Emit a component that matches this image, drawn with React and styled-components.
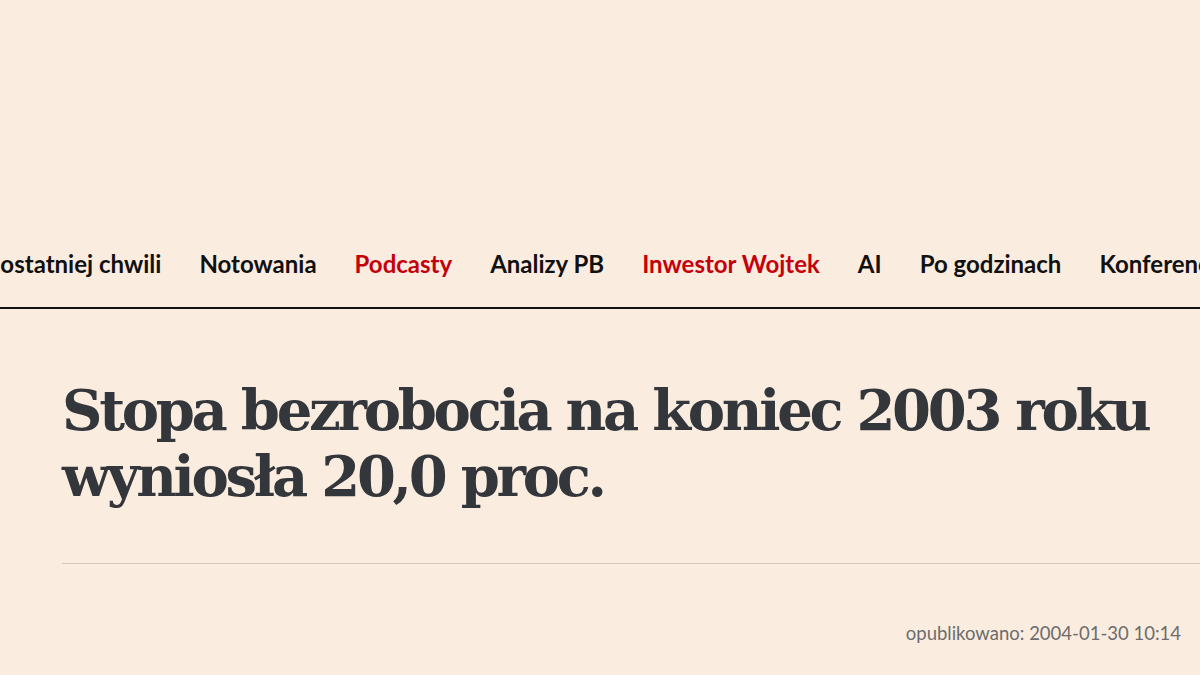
import React from 'react'
import styled, { createGlobalStyle } from 'styled-components'

const GlobalStyle = createGlobalStyle`
  html, body {
    margin: 0;
    padding: 0;
    background: #fbece0;
  }
  body {
    font-family: Lato, 'Liberation Sans', sans-serif;
    overflow: hidden;
  }
`

const Page = styled.div`
  width: 1200px;
  height: 675px;
  overflow: hidden;
  background: #fbece0;
`

const AdSlot = styled.div`
  height: 230px;
`

const Nav = styled.nav`
  height: 77px;
  border-bottom: 2px solid #111;
  overflow: hidden;
`

const NavTrack = styled.ul`
  list-style: none;
  box-sizing: border-box;
  margin: 0 0 0 ${p => p.offset}px;
  padding: 0 0 9px;
  height: 100%;
  display: flex;
  align-items: center;
  gap: 38px;
  white-space: nowrap;
`

const NavItem = styled.li`
  font-family: Lato, 'Liberation Sans', sans-serif;
  font-weight: 700;
  font-size: 24px;
  line-height: 1;
  color: ${p => (p.accent ? '#c4000b' : '#111')};
`

const Article = styled.article`
  padding: 68px 19px 0 62px;
`

const Title = styled.h1`
  margin: 0;
  font-family: 'DejaVu Serif', 'Liberation Serif', serif;
  font-weight: 700;
  font-size: 56px;
  line-height: 66px;
  letter-spacing: -3.3px;
  color: #33363a;
`

const Divider = styled.hr`
  margin: 54px -19px 0 0;
  border: 0;
  border-top: 1px solid #d8c8ba;
`

const Meta = styled.div`
  display: flex;
  justify-content: flex-end;
  padding-top: 58px;
  font-family: Lato, 'Liberation Sans', sans-serif;
  font-size: 18.5px;
  line-height: 22px;
  color: #6c6c6c;
`

const links = [
  { label: 'Z ostatniej chwili' },
  { label: 'Notowania' },
  { label: 'Podcasty', accent: true },
  { label: 'Analizy PB' },
  { label: 'Inwestor Wojtek', accent: true },
  { label: 'AI' },
  { label: 'Po godzinach' },
  { label: 'Konferencje' },
  { label: 'Rankingi' },
]

const App = () => (
  <Page>
    <GlobalStyle />
    <AdSlot />
    <Nav>
      <NavTrack offset={-20}>
        {links.map(l => (
          <NavItem key={l.label} accent={l.accent}>{l.label}</NavItem>
        ))}
      </NavTrack>
    </Nav>
    <Article>
      <Title>Stopa bezrobocia na koniec 2003 roku wyniosła 20,0 proc.</Title>
      <Divider />
      <Meta>opublikowano: 2004-01-30 10:14</Meta>
    </Article>
  </Page>
)

export default App
